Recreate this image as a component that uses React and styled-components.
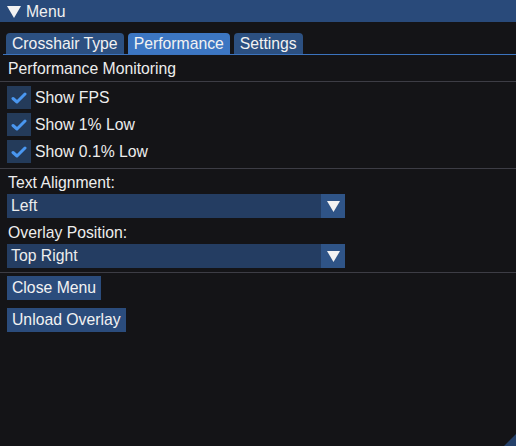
import React from "react";
import styled, { createGlobalStyle } from "styled-components";

const Global = createGlobalStyle`
  html, body { margin: 0; padding: 0; background: #141417; }
  body { font-family: "Liberation Sans", Arial, sans-serif; font-size: 15.75px; color: #ededed; }
  * { box-sizing: border-box; }
`;

const Window = styled.div`
  width: 516px;
  height: 446px;
  background: #141417;
  display: flex;
  flex-direction: column;
  position: relative;
  overflow: hidden;
`;

const TitleBar = styled.div`
  height: 22px;
  background: #294a7a;
  display: flex;
  align-items: center;
  gap: 5px;
  padding: 1px 0 0 7px;
  color: #f0f0f0;
`;

const Body = styled.div`
  display: flex;
  flex-direction: column;
  padding-top: 11px;
`;

const TabBar = styled.div`
  display: flex;
  gap: 4px;
  border-bottom: 1px solid #3b73be;
  margin-left: 3px;
  padding-left: 3px;
`;

const Tab = styled.div`
  height: 21px;
  padding: 1px 6px 0;
  display: flex;
  align-items: center;
  border-radius: 4px 4px 0 0;
  background: ${(p) => (p.$active ? "#3c76c2" : "#2c5081")};
  color: #f2f2f2;
`;

const Section = styled.div`
  padding: 2px 8px 0;
  height: 26px;
  display: flex;
  align-items: center;
`;

const Separator = styled.div`
  height: 1px;
  background: #3d3d45;
`;

const Group = styled.div`
  display: flex;
  flex-direction: column;
  gap: ${(p) => p.$gap || "4px"};
  padding: ${(p) => p.$pad || "0 7px"};
`;

const CheckRow = styled.label`
  display: flex;
  align-items: center;
  gap: 4px;
  height: 23px;
`;

const Box = styled.span`
  width: 24px;
  height: 23px;
  background: #243b5a;
  display: flex;
  align-items: center;
  justify-content: center;
`;

const Label = styled.div`
  height: 23px;
  display: flex;
  align-items: center;
  padding-left: 1px;
  margin-top: ${(p) => p.$mt || "0"};
`;

const Combo = styled.div`
  width: 338px;
  height: 24px;
  display: flex;
  background: #243d62;
`;

const ComboValue = styled.div`
  flex: 1;
  display: flex;
  align-items: center;
  padding-left: 4px;
`;

const ComboArrow = styled.div`
  width: 24px;
  background: #2f5487;
  display: flex;
  align-items: center;
  justify-content: center;
`;

const Button = styled.div`
  align-self: flex-start;
  height: 24px;
  padding: 0 5px;
  display: flex;
  align-items: center;
  background: #2b4c7c;
  color: #f2f2f2;
`;

const Grip = styled.svg`
  position: absolute;
  right: 0;
  bottom: 0;
`;

const Check = () => (
  <svg width="16" height="12" viewBox="0 0 16 12">
    <path d="M2 6.5 L6 10 L14 2" fill="none" stroke="#4a97f0" strokeWidth="3" strokeLinecap="round" strokeLinejoin="round" />
  </svg>
);

const Down = ({ size = 13 }) => (
  <svg width={size} height={size - 2} viewBox="0 0 13 11">
    <path d="M0 0 H13 L6.5 11 Z" fill="#f2f2f2" />
  </svg>
);

export default function App() {
  return (
    <>
      <Global />
      <Window>
        <TitleBar>
          <Down size={14} />
          <span>Menu</span>
        </TitleBar>
        <Body>
          <TabBar>
            <Tab>Crosshair Type</Tab>
            <Tab $active>Performance</Tab>
            <Tab>Settings</Tab>
          </TabBar>
          <Section>Performance Monitoring</Section>
          <Separator />
          <Group $gap="4px" $pad="4px 7px 5px">
            <CheckRow><Box><Check /></Box>Show FPS</CheckRow>
            <CheckRow><Box><Check /></Box>Show 1% Low</CheckRow>
            <CheckRow><Box><Check /></Box>Show 0.1% Low</CheckRow>
          </Group>
          <Separator />
          <Group $gap="0" $pad="2px 7px 4px">
            <Label>Text Alignment:</Label>
            <Combo>
              <ComboValue>Left</ComboValue>
              <ComboArrow><Down /></ComboArrow>
            </Combo>
            <Label $mt="3px">Overlay Position:</Label>
            <Combo>
              <ComboValue>Top Right</ComboValue>
              <ComboArrow><Down /></ComboArrow>
            </Combo>
          </Group>
          <Separator />
          <Group $gap="8px" $pad="3px 7px">
            <Button>Close Menu</Button>
            <Button>Unload Overlay</Button>
          </Group>
        </Body>
        <Grip width="12" height="12" viewBox="0 0 12 12">
          <path d="M12 0 V12 H0 Z" fill="#25416a" />
        </Grip>
      </Window>
    </>
  );
}
